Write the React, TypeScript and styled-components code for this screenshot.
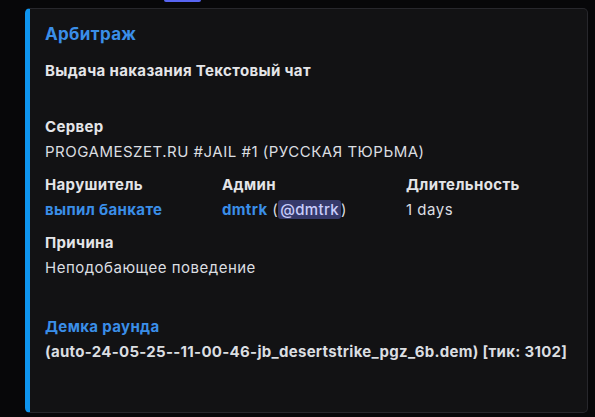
import styled, { createGlobalStyle } from 'styled-components';

const Global = createGlobalStyle`
  html, body {
    margin: 0;
    padding: 0;
    background: #070709;
  }
  body {
    font-family: Inter, "Noto Sans", sans-serif;
    color: #dbdee1;
  }
`;

const Page = styled.div`
  width: 595px;
  height: 417px;
  position: relative;
  overflow: hidden;
`;

const TopPill = styled.div`
  position: absolute;
  left: 164px;
  top: 0;
  width: 37px;
  height: 2px;
  background: #5865f2;
  border-radius: 0 0 2px 2px;
`;

const Embed = styled.article`
  position: absolute;
  left: 25px;
  top: 8px;
  width: 563px;
  height: 405px;
  box-sizing: border-box;
  background: #121214;
  border: 1px solid #27272c;
  border-left: 5px solid #0e95f0;
  border-radius: 5px;
  padding: 14px 16px 16px 15px;
  display: flex;
  flex-direction: column;
  letter-spacing: 0.35px;
`;

const Title = styled.div`
  font-size: 17px;
  font-weight: 700;
  line-height: 22px;
  color: #3a8ee8;
`;

const Description = styled.div`
  margin-top: 17px;
  font-size: 15px;
  font-weight: 700;
  line-height: 18px;
  color: #e4e5e8;
`;

const Fields = styled.div<{ $top: number }>`
  display: grid;
  grid-template-columns: 177px 184px 1fr;
  row-gap: 14px;
  margin-top: ${(p) => p.$top}px;
`;

const Field = styled.div<{ $full?: boolean }>`
  grid-column: ${(p) => (p.$full ? '1 / -1' : 'auto')};
  display: flex;
  flex-direction: column;
  gap: 6px;
`;

const Name = styled.div<{ $accent?: boolean }>`
  font-size: 15px;
  font-weight: 700;
  line-height: 18px;
  color: ${(p) => (p.$accent ? '#3a8ee8' : '#e4e5e8')};
`;

const Value = styled.div<{ $bold?: boolean }>`
  font-size: 15px;
  font-weight: ${(p) => (p.$bold ? 700 : 400)};
  letter-spacing: ${(p) => (p.$bold ? '0.3px' : '0.5px')};
  line-height: 20px;
  color: #dbdee1;
  white-space: nowrap;
`;

const Link = styled.span`
  color: #3a8ee8;
  font-weight: 700;
  letter-spacing: 0.35px;
`;

const Mention = styled.span`
  background: #363a6b;
  color: #c9cdfb;
  border-radius: 3px;
  padding: 0 2px;
  font-weight: 500;
  letter-spacing: 0.35px;
`;

export default function App() {
  return (
    <Page>
      <Global />
      <TopPill />
      <Embed>
        <Title>Арбитраж</Title>
        <Description>Выдача наказания Текстовый чат</Description>
        <Fields $top={38}>
          <Field $full>
            <Name>Сервер</Name>
            <Value>PROGAMESZET.RU #JAIL #1 (РУССКАЯ ТЮРЬМА)</Value>
          </Field>
          <Field>
            <Name>Нарушитель</Name>
            <Value>
              <Link>выпил банкате</Link>
            </Value>
          </Field>
          <Field>
            <Name>Админ</Name>
            <Value>
              <Link>dmtrk</Link> (<Mention>@dmtrk</Mention>)
            </Value>
          </Field>
          <Field>
            <Name>Длительность</Name>
            <Value>1 days</Value>
          </Field>
          <Field $full>
            <Name>Причина</Name>
            <Value>Неподобающее поведение</Value>
          </Field>
        </Fields>
        <Fields $top={40}>
          <Field $full>
            <Name $accent>Демка раунда</Name>
            <Value $bold>(auto-24-05-25--11-00-46-jb_desertstrike_pgz_6b.dem) [тик: 3102]</Value>
          </Field>
        </Fields>
      </Embed>
    </Page>
  );
}
